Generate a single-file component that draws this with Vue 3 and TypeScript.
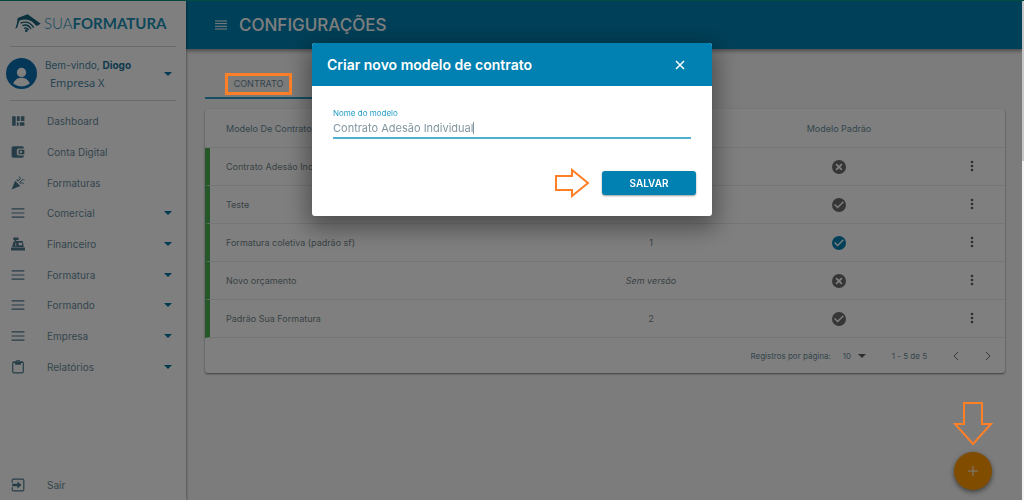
<script setup lang="ts">
import { ref } from 'vue'

interface MenuItem {
  label: string
  icon: string
  expandable?: boolean
}

interface Contract {
  name: string
  version: string
  status: 'yes' | 'no' | 'active'
}

const icons = {
  dashboard: 'M2 4h6v16H2zM10 4h5v8h-5zM17 4h6v8h-6zM10 14h3v6h-3zM15 14h8v6h-8z',
  wallet:
    'M22 18v1a3 3 0 0 1-3 3H4a3 3 0 0 1-3-3V5a3 3 0 0 1 3-3h15a3 3 0 0 1 3 3v1h-9a3 3 0 0 0-3 3v6a3 3 0 0 0 3 3zm-9-2h10V8H13v8zm4-2a2 2 0 1 1 0-4 2 2 0 0 1 0 4z',
  party:
    'M1 23L7 8l9 9L1 23zM14.5 12.5l5.600-5.600a1.250 1.250 0 0 1 1.800 0l.6.6 1-1-.6-.6a2.700 2.700 0 0 0-3.800 0L13.500 11.500l1 1zM10 7.900l-.6.6 1 1 .6-.6a2.700 2.700 0 0 0 0-3.800l-.6-.6-1 1 .6.6a1.250 1.250 0 0 1 0 1.800zM16.900 11.500l-1.600 1.600 1 1 1.600-1.600a1.250 1.250 0 0 1 1.800 0l1.600 1.600 1-1-1.600-1.600a2.700 2.700 0 0 0-3.800 0zM14.900 4.900l-3.600 3.600 1 1 3.600-3.600a2.700 2.700 0 0 0 0-3.800L14.300.5l-1 1 1.600 1.600a1.250 1.250 0 0 1 0 1.800z',
  lines: 'M1 4h22v2H1zm0 7h22v2H1zm0 7h22v2H1z',
  register:
    'M0 18h24v5H0zM2 17l2-9h2V5H4V1h9v4H9v2h11l2 10H2zm11-7v4h6v-4h-6zm-6 0v1h2v-1H7zm0 3v2h2v-2H7z',
  clipboard:
    'M19 2h-4a3 3 0 0 0-6 0H5a3 3 0 0 0-3 3v15a3 3 0 0 0 3 3h14a3 3 0 0 0 3-3V5a3 3 0 0 0-3-3zm-7-1a1 1 0 1 1 0 2 1 1 0 0 1 0-2zM4 21V5h3v3h10V5h3v16H4z',
  exit:
    'M11 18l7-6-7-6v4H2v4h9zM20 1H4a3 3 0 0 0-3 3v4h2V3h18v18H3v-5H1v4a3 3 0 0 0 3 3h16a3 3 0 0 0 3-3V4a3 3 0 0 0-3-3z',
  check:
    'M12 2a10 10 0 1 0 0 20 10 10 0 0 0 0-20zm-2 15l-5-5 1.400-1.400L10 14.200l7.600-7.600L19 8l-9 9z',
  cross:
    'M12 2a10 10 0 1 0 0 20 10 10 0 0 0 0-20zm5 13.200L15.200 17 12 13.800 8.800 17 7 15.200l3.200-3.200L7 8.800 8.800 7l3.200 3.200L15.200 7 17 8.800 13.800 12l3.200 3.200z',
}

const menu: MenuItem[] = [
  { label: 'Dashboard', icon: icons.dashboard },
  { label: 'Conta Digital', icon: icons.wallet },
  { label: 'Formaturas', icon: icons.party },
  { label: 'Comercial', icon: icons.lines, expandable: true },
  { label: 'Financeiro', icon: icons.register, expandable: true },
  { label: 'Formatura', icon: icons.lines, expandable: true },
  { label: 'Formando', icon: icons.lines, expandable: true },
  { label: 'Empresa', icon: icons.lines, expandable: true },
  { label: 'Relatórios', icon: icons.clipboard, expandable: true },
]

const contracts: Contract[] = [
  { name: 'Contrato Adesão Individual', version: '1', status: 'no' },
  { name: 'Teste', version: '1', status: 'yes' },
  { name: 'Formatura coletiva (padrão sf)', version: '1', status: 'active' },
  { name: 'Novo orçamento', version: 'Sem versão', status: 'no' },
  { name: 'Padrão Sua Formatura', version: '2', status: 'yes' },
]

const modelName = ref('Contrato Adesão Individual')
const pageSize = ref('10')
</script>

<template>
  <div class="app">
    <aside class="sidebar">
      <div class="logo">
        <svg class="logo-mark" viewBox="0 0 78 54" aria-hidden="true">
          <path d="M8 12L38 1l39 28-12 7C52 16 30 12 13 20L7 40l-6 5 5-18z" />
          <path class="cap" d="M16 17q28-8 46 17L76 29 38 4z" />
          <path class="arc" d="M17 27q25-9 39 14M22 35q17-7 26 10M27 43q8-4 14 5" />
          <circle cx="34" cy="50" r="4" />
        </svg>
        <span class="logo-text">SUA<b>FORMATURA</b></span>
      </div>
      <button class="profile" type="button">
        <svg class="avatar" viewBox="0 0 30 30" aria-hidden="true">
          <circle cx="15" cy="15" r="15" fill="#0b6fb0" />
          <circle cx="15" cy="14" r="4.500" fill="#fff" />
          <path d="M7 25c2-8 14-8 16 0q-8 5-16 0z" fill="#fff" />
        </svg>
        <span class="who">
          <span>Bem-vindo, <b>Diogo</b></span>
          <span class="company">Empresa X</span>
        </span>
        <i class="caret"></i>
      </button>
      <nav class="menu">
        <a v-for="item in menu" :key="item.label" href="#" class="menu-item">
          <svg class="icon" viewBox="0 0 24 24" aria-hidden="true"><path :d="item.icon" /></svg>
          <span>{{ item.label }}</span>
          <i v-if="item.expandable" class="caret"></i>
        </a>
      </nav>
      <a href="#" class="menu-item exit">
        <svg class="icon" viewBox="0 0 24 24" aria-hidden="true"><path :d="icons.exit" /></svg>
        <span>Sair</span>
      </a>
    </aside>

    <div class="page">
      <header class="topbar">
        <button class="burger" type="button" aria-label="Menu">
          <svg viewBox="0 0 12 10"><path d="M0 1h12M0 3.600h12M0 6.300h12M0 9h12" /></svg>
        </button>
        <h1>CONFIGURAÇÕES</h1>
      </header>
      <main class="content">
        <div class="tabs"><button class="tab" type="button">CONTRATO</button></div>
        <section class="card">
          <table>
            <thead>
              <tr>
                <th class="name">Modelo De Contrato</th>
                <th class="version">Versão</th>
                <th class="default">Modelo Padrão</th>
                <th class="actions"></th>
              </tr>
            </thead>
            <tbody>
              <tr v-for="row in contracts" :key="row.name">
                <td class="name">{{ row.name }}</td>
                <td :class="{ none: row.version === 'Sem versão' }">{{ row.version }}</td>
                <td>
                  <svg class="status" :class="{ active: row.status === 'active' }" viewBox="2 2 20 20" aria-hidden="true">
                    <path :d="row.status === 'no' ? icons.cross : icons.check" />
                  </svg>
                </td>
                <td class="actions">
                  <button class="more" type="button" aria-label="Opções">
                    <svg viewBox="0 0 4 12">
                      <circle cx="2" cy="2" r="1.300" /><circle cx="2" cy="6" r="1.300" /><circle cx="2" cy="10" r="1.300" />
                    </svg>
                  </button>
                </td>
              </tr>
            </tbody>
          </table>
          <footer class="pager">
            <label for="page-size">Registros por página:</label>
            <span class="select-wrap">
              <select id="page-size" v-model="pageSize"><option>10</option></select>
              <i class="caret"></i>
            </span>
            <span class="range">1 - 5 de 5</span>
            <button type="button" aria-label="Anterior"><svg viewBox="0 0 6 10"><path d="M5 1L1 5l4 4" /></svg></button>
            <button type="button" aria-label="Próxima"><svg viewBox="0 0 6 10"><path d="M1 1l4 4-4 4" /></svg></button>
          </footer>
        </section>
      </main>
      <button class="fab" type="button" aria-label="Adicionar">
        <svg viewBox="0 0 10 10"><path d="M5 0v10M0 5h10" /></svg>
      </button>
    </div>

    <div class="overlay">
      <form class="dialog" role="dialog" aria-labelledby="dialog-title" @submit.prevent>
        <header class="dialog-head">
          <h2 id="dialog-title">Criar novo modelo de contrato</h2>
          <button type="button" aria-label="Fechar"><svg viewBox="0 0 10 10"><path d="M1 1l8 8M9 1L1 9" /></svg></button>
        </header>
        <div class="dialog-body">
          <label for="model-name">Nome do modelo</label>
          <div class="field">
            <input id="model-name" v-model="modelName" type="text" />
            <i class="cursor"></i>
          </div>
          <div class="dialog-actions">
            <svg class="arrow-right" viewBox="0 0 36 30" aria-hidden="true">
              <path d="M2 8h16V2l16 13-16 13v-6H2z" />
            </svg>
            <button class="save" type="submit">SALVAR</button>
          </div>
        </div>
      </form>
      <i class="tab-mark"></i>
      <svg class="arrow-down" viewBox="0 0 40 46" aria-hidden="true">
        <path d="M11 2h18v21h9L20 43 2 23h9z" />
      </svg>
    </div>
    <div class="scrollbar"></div>
  </div>
</template>

<style>
body {
  background: #f8f8f8;
  overflow: hidden;
}
</style>

<style scoped>
* {
  box-sizing: border-box;
}
.app {
  display: flex;
  min-height: 100vh;
  font-family: Inter, "Open Sans", sans-serif;
  font-size: 10px;
  color: #6a8b9b;
  border-top: 1px solid #00a08c;
}
button,
input,
select {
  font: inherit;
  color: inherit;
  border: 0;
  padding: 0;
  background: none;
}
svg {
  display: block;
}
a {
  color: inherit;
  text-decoration: none;
}
.sidebar {
  width: 186px;
  flex: none;
  display: flex;
  flex-direction: column;
  background: #fff;
  box-shadow: 1px 0 2px rgba(0, 0, 0, 0.3);
  z-index: 1;
}
.logo {
  display: flex;
  align-items: center;
  gap: 3px;
  height: 46px;
  margin: 0 10px;
  padding-left: 5px;
  padding-bottom: 2px;
  border-bottom: 1px solid #d4d4d4;
  color: #1a8fb5;
}
.logo-mark {
  width: 26px;
  height: 18px;
  fill: #16647c;
}
.arc {
  fill: none;
  stroke: #16647c;
  stroke-width: 4;
}
.logo-text {
  font: 300 15px/20px Lato, sans-serif;
}
.logo-text b {
  font-weight: 700;
}
.profile {
  display: flex;
  align-items: center;
  height: 54px;
  margin: 0 10px;
  border-bottom: 1px solid #d4d4d4;
  text-align: left;
  color: #4a88a4;
}
.avatar {
  width: 31px;
  height: 31px;
  margin-left: -4px;
}
.who {
  display: flex;
  flex-direction: column;
  gap: 4px;
  margin-left: 8px;
  line-height: 14px;
}
.who b {
  font-weight: 700;
  color: #1a7298;
}
.company {
  padding-left: 5px;
  font: 11px/14px "Noto Sans", sans-serif;
}
.caret {
  width: 0;
  border: 4px solid transparent;
  border-top-color: #00769f;
  border-bottom: 0;
  margin-left: auto;
}
.profile .caret {
  margin-right: 4px;
}
.menu {
  display: grid;
  grid-auto-rows: 1fr;
  height: 276px;
  margin-top: 5px;
}
.menu-item {
  display: flex;
  align-items: center;
  padding: 0 14px 0 11px;
}
.icon {
  width: 14px;
  height: 14px;
  margin-right: 22px;
  fill: #4c7a90;
}
.exit {
  margin-top: auto;
  height: 30px;
}
.page {
  flex: 1;
  min-width: 0;
}
.topbar {
  display: flex;
  align-items: center;
  gap: 12px;
  height: 48px;
  padding-left: 29px;
  background: #0081b1;
  color: #fff;
  box-shadow: 0 2px 4px rgba(0, 0, 0, 0.4);
}
.burger svg {
  width: 12px;
  height: 10px;
}
.burger path,
.fab path {
  stroke: #fff;
  stroke-width: 1;
}
h1 {
  margin: 0;
  font-size: 17px;
  line-height: 24px;
  font-weight: 500;
}
.content {
  padding: 20px 19px;
}
.tabs {
  display: flex;
}
.tab {
  width: 107px;
  height: 30px;
  border-bottom: 2px solid #2a9cc4;
  font-size: 9px;
}
.card {
  margin-top: 10px;
  background: #fff;
  border-radius: 3px;
  box-shadow: 0 1px 2px rgba(0, 0, 0, 0.5);
}
table {
  width: 100%;
  table-layout: fixed;
  border-collapse: separate;
  border-spacing: 0;
  font-size: 9px;
}
th,
td {
  height: 38px;
  padding: 0;
  text-align: center;
  font-weight: 400;
  border-bottom: 1px solid #ebebeb;
}
th {
  height: 39px;
}
td {
  color: #74868c;
}
.name {
  width: 44%;
  padding-left: 21px;
  text-align: left;
}
td.name {
  padding-left: 16px;
  border-left: 5px solid #4caf50;
}
.version,
.default {
  width: 23.500%;
}
.actions {
  padding-left: 6px;
}
.none {
  font-style: italic;
}
.status {
  width: 14px;
  height: 14px;
  margin: 0 auto;
  fill: #6c6c6c;
}
.status.active {
  fill: #0081b1;
}
.more svg {
  width: 4px;
  height: 12px;
  fill: #5c5c5c;
}
.pager {
  display: flex;
  align-items: center;
  justify-content: flex-end;
  height: 35px;
  padding-right: 14px;
  font-size: 8px;
}
.select-wrap {
  display: flex;
  align-items: center;
  gap: 4px;
  margin: 0 26px 0 12px;
}
.pager select {
  appearance: none;
  width: 11px;
}
.pager .caret {
  border-top-color: #5c5c5c;
}
.range {
  margin-right: 26px;
}
.pager svg {
  width: 6px;
  height: 10px;
  fill: none;
  stroke: #777;
}
.pager button + button {
  margin-left: 26px;
}
.fab {
  position: fixed;
  right: 32px;
  bottom: 10px;
  width: 38px;
  height: 38px;
  display: grid;
  place-items: center;
  border-radius: 50%;
  background: #ff9800;
  box-shadow: 0 2px 5px rgba(0, 0, 0, 0.5);
}
.fab svg {
  width: 10px;
  height: 10px;
}
.overlay {
  position: fixed;
  inset: 0;
  z-index: 5;
  display: flex;
  justify-content: center;
  align-items: flex-start;
  padding-top: 43px;
  background: rgba(0, 0, 0, 0.5);
}
.dialog {
  width: 400px;
  overflow: hidden;
  background: #fff;
  border-radius: 3px;
  box-shadow: 0 8px 24px 4px rgba(0, 0, 0, 0.4);
}
.dialog-head {
  display: flex;
  align-items: center;
  justify-content: space-between;
  height: 43px;
  padding: 0 27px 0 15px;
  background: #0081b1;
  color: #fff;
}
h2 {
  margin: 0;
  font-size: 14px;
  line-height: 20px;
  font-weight: 600;
}
.dialog-head svg {
  width: 10px;
  height: 10px;
  stroke: #fff;
  stroke-width: 1.500;
}
.dialog-body {
  padding: 21px 21px 18px;
}
.dialog-body label {
  display: block;
  font-size: 8px;
  line-height: 12px;
  color: #239bc4;
}
.field {
  display: flex;
  align-items: center;
  height: 20px;
  border-bottom: 2px solid #4fb0d0;
}
.field input {
  field-sizing: content;
  outline: 0;
  font-size: 11px;
  color: #8296a0;
}
.cursor {
  width: 1px;
  height: 12px;
  background: #8296a0;
}
.dialog-actions {
  display: flex;
  align-items: center;
  justify-content: flex-end;
  gap: 12px;
  margin-top: 29px;
  margin-right: -5px;
}
.arrow-right,
.arrow-down {
  fill: none;
  stroke: #ff7f27;
  stroke-width: 2;
}
.arrow-right {
  width: 36px;
  height: 30px;
}
.save {
  width: 94px;
  height: 24px;
  border-radius: 3px;
  background: #0081b1;
  color: #fff;
  font-weight: 600;
  box-shadow: 0 1px 2px rgba(0, 0, 0, 0.4);
}
.tab-mark {
  position: absolute;
  left: 225px;
  top: 73px;
  width: 67px;
  height: 22px;
  border: 3px solid #ff7f27;
}
.arrow-down {
  position: absolute;
  right: 31px;
  bottom: 53px;
  width: 40px;
  height: 46px;
}
.scrollbar {
  position: fixed;
  top: 1px;
  right: 0;
  bottom: 0;
  width: 2px;
  z-index: 6;
  background: linear-gradient(#c8c8c8 0 160px, #f4f4f4 160px);
}
</style>
